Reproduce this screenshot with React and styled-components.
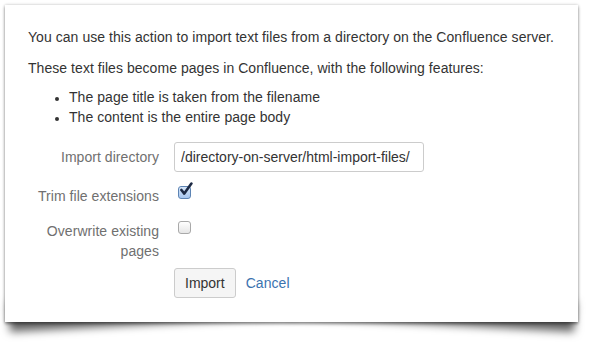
import React from "react";
import styled, { createGlobalStyle } from "styled-components";

const Global = createGlobalStyle`
  html, body { margin: 0; padding: 0; background: #ffffff; }
  body { font-family: "Liberation Sans", Arial, Helvetica, sans-serif; color: #333333; }
`;

const Stage = styled.div`
  position: relative;
  isolation: isolate;
  padding: 5px 14px 29px 5px;
  width: 592px;
  height: 351px;
  box-sizing: border-box;
  background: #fff;
`;

const Card = styled.div`
  position: relative;
  box-sizing: border-box;
  width: 573px;
  height: 317px;
  background: #fff;
  padding: 22px 20px 0 23px;
  box-shadow: 0 0 3px rgba(0, 0, 0, 0.22), 0 2px 3px rgba(0, 0, 0, 0.38);
  font-size: 14px;
  line-height: 20px;
  letter-spacing: 0.05px;

  &::before,
  &::after {
    content: "";
    position: absolute;
    z-index: -1;
    bottom: 14px;
    width: 50%;
    height: 30px;
    box-shadow: 0 16px 9px rgba(0, 0, 0, 0.6);
  }
  &::before {
    left: 3px;
    transform: rotate(-3.2deg);
  }
  &::after {
    right: 3px;
    transform: rotate(3.2deg);
  }
`;

const Para = styled.p`
  margin: 0 0 ${(p) => p.$gap || 11}px;
`;

const List = styled.ul`
  margin: -2px 0 15px;
  padding-left: 41px;
  list-style: disc;
  li::marker { font-size: 12px; }
`;

const Form = styled.div`
  display: grid;
  grid-template-columns: 131px 1fr;
  column-gap: 15px;
  align-items: start;
`;

const Label = styled.label`
  color: #707070;
  text-align: right;
  line-height: 20px;
  padding-top: ${(p) => p.$pt || 0}px;
  margin-bottom: ${(p) => p.$mb || 0}px;
`;

const Field = styled.div`
  display: flex;
  align-items: flex-start;
  margin-bottom: ${(p) => p.$mb || 0}px;
`;

const TextInput = styled.input`
  box-sizing: border-box;
  width: 250px;
  height: 30px;
  border: 1px solid #cccccc;
  border-radius: 3px;
  padding: 0 6px;
  font: inherit;
  font-size: 14px;
  color: #333;
  background: #fff;
  outline: none;
`;

const Box = styled.span`
  box-sizing: border-box;
  display: inline-flex;
  width: 13px;
  height: 13px;
  margin: ${(p) => p.$top || 0}px 0 0 4px;
  border-radius: 3px;
  border: 1px solid ${(p) => (p.$checked ? "#5d84b4" : "#a9a9a9")};
  background: ${(p) =>
    p.$checked
      ? "linear-gradient(#d6e6f9, #a7c6ee)"
      : "linear-gradient(#ffffff, #e6e6e6)"};
  position: relative;
  svg { position: absolute; left: 0px; top: -5px; }
`;

const Actions = styled.div`
  grid-column: 2;
  display: flex;
  align-items: center;
  gap: 10px;
`;

const Button = styled.button`
  box-sizing: border-box;
  height: 30px;
  padding: 0 10px;
  border: 1px solid #cccccc;
  border-radius: 3px;
  background: #f5f5f5;
  color: #333;
  font: inherit;
  font-size: 14px;
`;

const LinkBtn = styled.a`
  color: #3b73af;
  text-decoration: none;
  font-size: 14px;
`;

const Check = () => (
  <svg width="15" height="15" viewBox="0 0 15 15">
    <path d="M2.4 8 L5.3 11.6 L12.4 1.6" fill="none" stroke="#1d2a44" strokeWidth="2.6" strokeLinecap="round" strokeLinejoin="round" />
  </svg>
);

export default function App() {
  return (
    <>
      <Global />
      <Stage>
        <Card>
          <Para>You can use this action to import text files from a directory on the Confluence server.</Para>
          <Para $gap={11}>These text files become pages in Confluence, with the following features:</Para>
          <List>
            <li>The page title is taken from the filename</li>
            <li>The content is the entire page body</li>
          </List>
          <Form>
            <Label $pt={5} $mb={14}>Import directory</Label>
            <Field $mb={14}>
              <TextInput defaultValue="/directory-on-server/html-import-files/" />
            </Field>
            <Label $mb={15}>Trim file extensions</Label>
            <Field $mb={15}>
              <Box $checked $top={0}><Check /></Box>
            </Field>
            <Label $mb={7}>Overwrite existing pages</Label>
            <Field $mb={7}>
              <Box $top={0} />
            </Field>
            <Actions>
              <Button>Import</Button>
              <LinkBtn href="#">Cancel</LinkBtn>
            </Actions>
          </Form>
        </Card>
      </Stage>
    </>
  );
}
